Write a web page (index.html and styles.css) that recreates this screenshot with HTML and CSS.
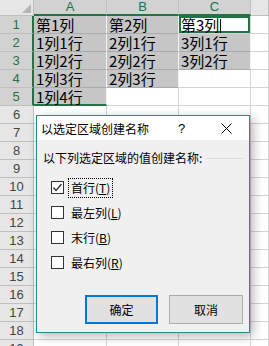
FILE: index.html
```html
<!DOCTYPE html>
<html>
<head>
    <title>以选定区域创建名称</title>
    <link rel="stylesheet" href="styles.css">
</head>
<body>
    <div class="sheet">
        <div class="corner"><span class="corner-mark"></span></div>
        <div class="ch sel">A</div>
        <div class="ch sel">B</div>
        <div class="ch sel">C</div>
        <div class="ch"></div>

        <div class="rh sel">1</div>
        <div class="c sel">第1列</div>
        <div class="c sel">第2列</div>
        <div class="c active">第3列<span class="caret"></span></div>
        <div class="c"></div>

        <div class="rh sel">2</div>
        <div class="c sel">1列1行</div>
        <div class="c sel">2列1行</div>
        <div class="c sel">3列1行</div>
        <div class="c"></div>

        <div class="rh sel">3</div>
        <div class="c sel">1列2行</div>
        <div class="c sel">2列2行</div>
        <div class="c sel">3列2行</div>
        <div class="c"></div>

        <div class="rh sel">4</div>
        <div class="c sel">1列3行</div>
        <div class="c sel">2列3行</div>
        <div class="c"></div>
        <div class="c"></div>

        <div class="rh sel">5</div>
        <div class="c sel last">1列4行</div>
        <div class="c"></div>
        <div class="c"></div>
        <div class="c"></div>

        <div class="rh">6</div><div class="c"></div><div class="c"></div><div class="c"></div><div class="c"></div>
        <div class="rh">7</div><div class="c"></div><div class="c"></div><div class="c"></div><div class="c"></div>
        <div class="rh">8</div><div class="c"></div><div class="c"></div><div class="c"></div><div class="c"></div>
        <div class="rh">9</div><div class="c"></div><div class="c"></div><div class="c"></div><div class="c"></div>
        <div class="rh">10</div><div class="c"></div><div class="c"></div><div class="c"></div><div class="c"></div>
        <div class="rh">11</div><div class="c"></div><div class="c"></div><div class="c"></div><div class="c"></div>
        <div class="rh">12</div><div class="c"></div><div class="c"></div><div class="c"></div><div class="c"></div>
        <div class="rh">13</div><div class="c"></div><div class="c"></div><div class="c"></div><div class="c"></div>
        <div class="rh">14</div><div class="c"></div><div class="c"></div><div class="c"></div><div class="c"></div>
        <div class="rh">15</div><div class="c"></div><div class="c"></div><div class="c"></div><div class="c"></div>
        <div class="rh">16</div><div class="c"></div><div class="c"></div><div class="c"></div><div class="c"></div>
        <div class="rh">17</div><div class="c"></div><div class="c"></div><div class="c"></div><div class="c"></div>
        <div class="rh">18</div><div class="c"></div><div class="c"></div><div class="c"></div><div class="c"></div>
        <div class="rh">19</div><div class="c"></div><div class="c"></div><div class="c"></div><div class="c"></div>
    </div>

    <!-- dialog floats over the sheet -->
    <div class="dialog">
        <div class="title">
            <span class="title-text">以选定区域创建名称</span>
            <span class="title-btn">?</span>
            <span class="title-btn">
                <svg width="11" height="11" viewBox="0 0 11 11">
                    <path d="M0.5 0.5L10.5 10.5M10.5 0.5L0.5 10.5" stroke="#000" stroke-width="1" fill="none"/>
                </svg>
            </span>
        </div>
        <div class="body">
            <div class="group-label">以下列选定区域的值创建名称:</div>
            <div class="options">
                <div class="option">
                    <span class="box">
                        <svg width="11" height="11" viewBox="0 0 11 11">
                            <path d="M1.5 5.5L4 8.5L9.5 2" stroke="#333" stroke-width="1.3" fill="none"/>
                        </svg>
                    </span>
                    <span class="option-text focus">首行(<u>T</u>)</span>
                </div>
                <div class="option">
                    <span class="box"></span>
                    <span class="option-text">最左列(<u>L</u>)</span>
                </div>
                <div class="option">
                    <span class="box"></span>
                    <span class="option-text">末行(<u>B</u>)</span>
                </div>
                <div class="option">
                    <span class="box"></span>
                    <span class="option-text">最右列(<u>R</u>)</span>
                </div>
            </div>
            <div class="buttons">
                <button class="btn default">确定</button>
                <button class="btn">取消</button>
            </div>
        </div>
    </div>
</body>
</html>
```

FILE: styles.css
```css
body {
    margin: 0;
    padding: 0;
    background-color: #fff;
    font-family: "Noto Sans CJK SC", sans-serif;
    overflow: hidden;
}

.sheet {
    display: grid;
    grid-template-columns: 34px 73px 72px 72px 18px;
    grid-template-rows: 16px;
    grid-auto-rows: 18px;
}

.corner {
    position: relative;
    background-color: #e6e6e6;
    border-right: 1px solid #bfbfbf;
    border-bottom: 1px solid #bfbfbf;
}

.corner-mark {
    position: absolute;
    right: 2px;
    bottom: 2px;
    width: 9px;
    height: 9px;
    background-color: #b5b5b5;
    clip-path: polygon(100% 0, 100% 100%, 0 100%);
}

.ch,
.rh {
    background-color: #e6e6e6;
    border-right: 1px solid #bfbfbf;
    border-bottom: 1px solid #bfbfbf;
    color: #444;
    font-family: "Liberation Sans", sans-serif;
    font-size: 13px;
    text-align: center;
}

.ch {
    line-height: 15px;
}

.rh {
    line-height: 17px;
}

.ch.sel {
    background-color: #d2d2d2;
    color: #217346;
    border-bottom: 2px solid #217346;
    line-height: 14px;
}

.rh.sel {
    background-color: #d2d2d2;
    color: #217346;
    border-right: 2px solid #217346;
}

.c {
    border-right: 1px solid #d4d4d4;
    border-bottom: 1px solid #d4d4d4;
    padding-left: 2px;
    font-size: 15px;
    line-height: 17px;
    color: #000;
    white-space: nowrap;
}

.c.sel {
    background-color: #c6c6c6;
    border-right-color: #f4f4f4;
    border-bottom-color: #ababab;
}

.c.last {
    border-bottom: 2px solid #217346;
}

.c.active {
    background-color: #fff;
    box-shadow: inset 0 0 0 2px #217346;
    line-height: 18px;
}

.caret {
    display: inline-block;
    width: 1px;
    height: 14px;
    margin-left: 1px;
    vertical-align: -2px;
    background-color: #000;
}

.dialog {
    position: absolute;
    left: 36px;
    top: 115px;
    width: 212px;
    height: 216px;
    border: 1px solid #1f8e8e;
    background-color: #f0f0f0;
    box-shadow: 3px 3px 10px rgba(0, 0, 0, 0.3);
    display: flex;
    flex-direction: column;
    font-size: 12px;
    color: #000;
}

.title {
    height: 24px;
    background-color: #fff;
    display: flex;
    align-items: center;
    padding-left: 4px;
}

.title-text {
    flex: 1;
}

.title-btn {
    width: 45px;
    height: 24px;
    display: flex;
    align-items: center;
    justify-content: center;
    font-size: 13px;
    font-family: "Liberation Sans", sans-serif;
}

.body {
    flex: 1;
    display: flex;
    flex-direction: column;
    padding: 9px 6px 8px 6px;
}

.group-label {
    display: flex;
    align-items: center;
    line-height: 18px;
}

.group-label::after {
    content: "";
    flex: 1;
    margin-left: 4px;
    border-top: 1px solid #dcdcdc;
}

.options {
    margin-top: 8px;
}

.option {
    height: 25px;
    display: flex;
    align-items: center;
    padding-left: 8px;
}

.box {
    width: 11px;
    height: 11px;
    border: 1px solid #333;
    background-color: #fff;
    display: flex;
}

.option-text {
    margin-left: 4px;
    padding: 0 2px;
    line-height: 18px;
    border: 1px solid transparent;
}

.option-text.focus {
    border: 1px dotted #000;
}

.buttons {
    margin-top: auto;
    display: flex;
    justify-content: flex-end;
    gap: 11px;
}

.btn {
    width: 74px;
    height: 29px;
    padding: 0;
    background-color: #e1e1e1;
    border: 1px solid #adadad;
    font-family: "Noto Sans CJK SC", sans-serif;
    font-size: 12px;
    color: #000;
}

.btn.default {
    width: 73px;
    border: 2px solid #0078d7;
}
```
